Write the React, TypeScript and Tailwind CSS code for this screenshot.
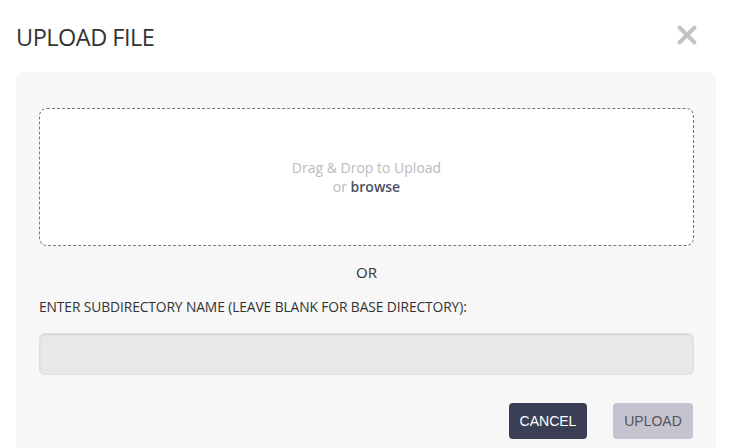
import { X } from 'lucide-react';

export default function App() {
  return (
    <div className="w-[736px] h-[448px] overflow-hidden bg-white font-['Open_Sans',sans-serif]">
      {/* Header */}
      <div className="flex items-center justify-between pl-4 pr-[34px] h-[72px] pb-[2px]">
        <h2 className="mt-[6px] text-[23.5px] text-[#333] tracking-[-0.5px]">UPLOAD FILE</h2>
        <X className="w-[30px] h-[30px] text-[#c4c4c4]" strokeWidth={3.2} />
      </div>

      {/* Panel */}
      <div className="ml-4 mr-5 bg-[#f7f7f7] rounded-t-lg pt-9 pl-[23px] pr-[22px] pb-6">
        <div className="h-[138px] bg-white border border-dashed border-[#777] rounded-lg flex flex-col items-center justify-center text-[14px] leading-[19px] text-[#bbb]">
          <div>Drag &amp; Drop to Upload</div>
          <div>
            or <span className="font-semibold text-[#4a5068]">browse</span>
          </div>
        </div>

        <div className="text-center text-[15px] text-[#333] mt-[15px]">OR</div>

        <label className="block mt-[13px] text-[13.8px] text-[#333] tracking-[-0.1px]">
          ENTER SUBDIRECTORY NAME (LEAVE BLANK FOR BASE DIRECTORY):
        </label>

        <input
          type="text"
          className="block w-full h-[42px] mt-4 bg-[#e8e8e8] border border-[#dedede] rounded-md shadow-[inset_0_1px_2px_rgba(0,0,0,0.08)] outline-none"
        />

        <div className="flex justify-end gap-[26px] mt-[28px] pr-[1px]">
          <button className="h-9 w-[78px] rounded bg-[#3b3f55] text-white text-[14px] font-['Liberation_Sans',sans-serif]">
            CANCEL
          </button>
          <button className="h-9 w-[80px] rounded bg-[#c5c3d0] text-[#555] text-[14px] font-['Liberation_Sans',sans-serif]">
            UPLOAD
          </button>
        </div>
      </div>
    </div>
  );
}
